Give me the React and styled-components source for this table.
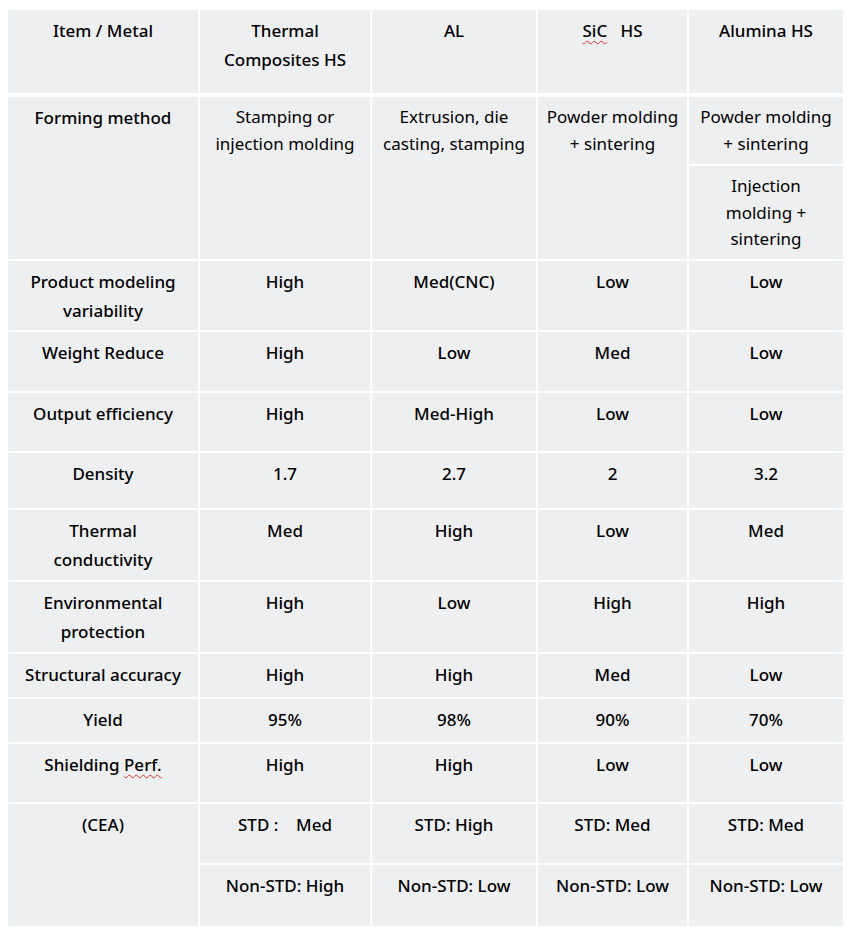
import styled, { createGlobalStyle } from "styled-components"

const GlobalStyle = createGlobalStyle`
    body {
        margin: 0;
        background: #ffffff;
        font-family: "Noto Sans", "Open Sans", sans-serif;
        color: #000;
    }
`

const COLS = "190px 170px 164px 149px 154px"

// body row heights (the forming and CEA rows are split in two)
const ROW_HEIGHTS = [67, 93, 69, 59, 58, 55, 70, 70, 43, 43, 58, 59, 61]

const simpleRows = [
    [["Product modeling", "variability"], "High", "Med(CNC)", "Low", "Low"],
    [["Weight Reduce"], "High", "Low", "Med", "Low"],
    [["Output efficiency"], "High", "Med-High", "Low", "Low"],
    [["Density"], "1.7", "2.7", "2", "3.2"],
    [["Thermal", "conductivity"], "Med", "High", "Low", "Med"],
    [["Environmental", "protection"], "High", "Low", "High", "High"],
    [["Structural accuracy"], "High", "High", "Med", "Low"],
    [["Yield"], "95%", "98%", "90%", "70%"],
]

export default function App() {
    return (
        <>
            <GlobalStyle />
            <Page>
                <Table>
                    <HeaderGrid>
                        <Cell $bold>Item / Metal</Cell>
                        <Cell $bold>Thermal<br />Composites HS</Cell>
                        <Cell $bold>AL</Cell>
                        <Cell $bold><Squiggle>SiC</Squiggle>{"   HS"}</Cell>
                        <Cell $bold>Alumina HS</Cell>
                    </HeaderGrid>

                    <BodyGrid>
                        <Cell $bold $span={2}>Forming method</Cell>
                        <Cell $span={2}>Stamping or<br />injection molding</Cell>
                        <Cell $span={2}>Extrusion, die<br />casting, stamping</Cell>
                        <Cell $span={2}>Powder molding<br />+ sintering</Cell>
                        <Cell>Powder molding<br />+ sintering</Cell>
                        <Cell>Injection<br />molding +<br />sintering</Cell>

                        {simpleRows.map(([label, ...values], i) => (
                            <Row key={i} label={label} values={values} />
                        ))}

                        <Cell $bold>Shielding <Squiggle>Perf.</Squiggle></Cell>
                        <Cell $bold>High</Cell>
                        <Cell $bold>High</Cell>
                        <Cell $bold>Low</Cell>
                        <Cell $bold>Low</Cell>

                        <Cell $bold $span={2}>(CEA)</Cell>
                        <Cell $bold>{"STD :    Med"}</Cell>
                        <Cell $bold>STD: High</Cell>
                        <Cell $bold>STD: Med</Cell>
                        <Cell $bold>STD: Med</Cell>
                        <Cell $bold>Non-STD: High</Cell>
                        <Cell $bold>Non-STD: Low</Cell>
                        <Cell $bold>Non-STD: Low</Cell>
                        <Cell $bold>Non-STD: Low</Cell>
                    </BodyGrid>
                </Table>
            </Page>
        </>
    )
}

function Row({ label, values }) {
    return (
        <>
            <Cell $bold>
                {label.map((line, k) => (
                    <Line key={k}>{line}</Line>
                ))}
            </Cell>
            {values.map((v, j) => (
                <Cell key={j} $bold>{v}</Cell>
            ))}
        </>
    )
}

const Page = styled.div`
    padding: 10px 8px;
`

const Table = styled.div`
    display: flex;
    flex-direction: column;
    gap: 4px;
    width: 835px;
    background: #ffffff;
`

const HeaderGrid = styled.div`
    display: grid;
    grid-template-columns: ${COLS};
    grid-template-rows: 83px;
    column-gap: 2px;
`

const BodyGrid = styled.div`
    display: grid;
    grid-template-columns: ${COLS};
    grid-template-rows: ${ROW_HEIGHTS.map((h) => h + "px").join(" ")};
    gap: 2px;
`

const Cell = styled.div`
    background: #eeeff1;
    padding: ${(p) => (p.$bold ? "6px" : "7px")} 4px 0;
    text-align: center;
    font-size: 17px;
    line-height: ${(p) => (p.$bold ? "29px" : "26.5px")};
    font-weight: ${(p) => (p.$bold ? 500 : 400)};
    white-space: pre;
    grid-row: ${(p) => (p.$span ? `span ${p.$span}` : "auto")};
`

const Line = styled.div`
    white-space: nowrap;
`

const Squiggle = styled.span`
    text-decoration: underline wavy #e0302a;
    text-decoration-thickness: 1px;
    text-underline-offset: 3px;
`
